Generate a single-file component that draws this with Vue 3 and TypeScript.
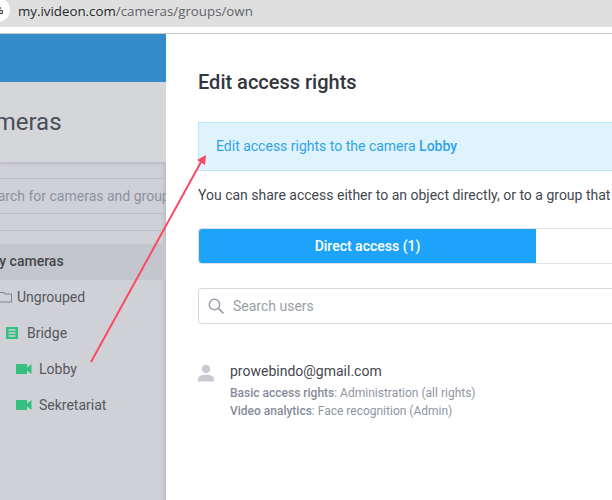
<script setup lang="ts">
interface Row { label: string; kind: 'folder' | 'group' | 'camera'; indent: number }
const rows: Row[] = [
  { label: 'Ungrouped', kind: 'folder', indent: 0 },
  { label: 'Bridge', kind: 'group', indent: 6 },
  { label: 'Lobby', kind: 'camera', indent: 16 },
  { label: 'Sekretariat', kind: 'camera', indent: 16 },
]
</script>

<template>
  <div class="page">
    <div class="urlbar">
      <span class="site-badge">
        <svg width="10" height="10" viewBox="0 0 10 10"><path d="M0 3h7M0 7h3" stroke="#444" stroke-width="1.4" fill="none"/><circle cx="7" cy="7" r="1.6" fill="none" stroke="#444" stroke-width="1.2"/></svg>
      </span>
      <span class="url"><span class="host">my.ivideon.com</span>/cameras/groups/own</span>
    </div>
    <div class="app">
      <aside class="side">
        <div class="side-head"></div>
        <div class="side-title"><h1>Cameras</h1></div>
        <div class="side-search"><span>Search for cameras and groups</span></div>
        <div class="side-gap"></div>
        <div class="side-my"><span>My cameras</span></div>
        <ul class="tree">
          <li v-for="r in rows" :key="r.label" class="tree-row" :style="{ paddingLeft: r.indent + 'px' }">
            <svg v-if="r.kind === 'folder'" class="ico" width="12" height="12" viewBox="0 0 12 12"><path d="M0 1.5h4l1.2 1.5h6.3v8H0" fill="none" stroke="#7f838c" stroke-width="1.1"/></svg>
            <svg v-else-if="r.kind === 'group'" class="ico" width="12" height="12" viewBox="0 0 12 12"><path fill-rule="evenodd" d="M0 0h12v12H0zM2.5 2.2v1.6h7V2.2zM2.5 5.2v1.6h7V5.2zM2.5 8.2v1.6h7V8.2z" fill="#35c07f"/></svg>
            <svg v-else class="ico" width="16" height="10" viewBox="0 0 16 10"><path d="M0 0h11v3.5L15.5 0v10L11 6.5V10H0z" fill="#35c07f"/></svg>
            <span>{{ r.label }}</span>
          </li>
        </ul>
      </aside>
      <main class="modal">
        <h2>Edit access rights</h2>
        <div class="alert"><span>Edit access rights to the camera <b>Lobby</b></span></div>
        <p class="lead">You can share access either to an object directly, or to a group that includes it.</p>
        <div class="tabs">
          <div class="tab on">Direct access (1)</div>
          <div class="tab"></div>
        </div>
        <div class="search">
          <svg width="16" height="16" viewBox="0 0 16 16"><circle cx="6.5" cy="6.5" r="5.2" fill="none" stroke="#9a9ea8" stroke-width="1.5"/><path d="M10.4 10.4l5 5" stroke="#9a9ea8" stroke-width="1.7"/></svg>
          <span>Search users</span>
        </div>
        <div class="user">
          <svg width="16" height="18" viewBox="0 0 16 18"><circle cx="8" cy="5" r="4.2" fill="#c7cad0"/><path d="M0 17.5v-2.5c0-3 4-4.2 8-4.2s8 1.2 8 4.2v2.5z" fill="#c7cad0"/></svg>
          <div class="user-info">
            <div class="email">prowebindo@gmail.com</div>
            <div class="meta"><b>Basic access rights</b>: Administration (all rights)</div>
            <div class="meta"><b>Video analytics</b>: Face recognition (Admin)</div>
          </div>
        </div>
      </main>
      <svg class="arrow" width="612" height="466" viewBox="0 0 612 466">
        <path d="M91 328L201 128" stroke="#fa4a63" stroke-width="2" fill="none"/>
        <path d="M206 121l-9 5 8 5z" fill="#fa4a63"/>
      </svg>
    </div>
  </div>
</template>

<style>
html, body { margin: 0; background: #fff; overflow: hidden; }
</style>

<style scoped>
.page { width: 612px; height: 500px; overflow: hidden; font-family: Roboto, "Liberation Sans", sans-serif; font-size: 14px; }
.urlbar { height: 27px; background: #dfdfdf; display: flex; align-items: center; padding-left: 18px; box-sizing: border-box; position: relative; }
.site-badge { position: absolute; left: -14px; top: -2px; width: 24px; height: 24px; border-radius: 50%; background: #fff; display: flex; align-items: center; justify-content: flex-end; padding-right: 6px; box-sizing: border-box; }
.url { font-family: "Open Sans", sans-serif; font-size: 13.3px; color: #5f6368; margin-top: -6px; }
.host { color: #26282c; }
.app { margin-top: 6px; height: 467px; border-top: 1px solid #c9c9c9; display: flex; position: relative; }
.side { width: 166px; flex: none; background: #d0d1d6; overflow: hidden; box-shadow: inset -6px 0 5px -5px #b1b2b6; }
.side-head { height: 48px; background: #338bc8; }
.side-title { height: 80px; background: #d5d6da; box-shadow: 0 2px 3px #bcbdc2; display: flex; align-items: center; }
.side-title h1 { margin: 0 0 0 -34px; font-size: 24px; font-weight: 400; color: #4b4e56; white-space: nowrap; }
.side-search { margin-top: 16px; height: 36px; box-sizing: border-box; border-top: 1px solid #bdbfc4; border-bottom: 1px solid #bdbfc4; display: flex; align-items: center; overflow: hidden; white-space: nowrap; color: #8b92a2; }
.side-search span { margin-left: -18px; }
.side-gap { height: 17px; box-sizing: border-box; border-bottom: 1px solid #bdbfc4; }
.side-my { margin-top: 13px; height: 36px; box-sizing: border-box; padding-bottom: 2px; background: #c3c6cd; display: flex; align-items: center; font-weight: 500; color: #43464e; }
.side-my span { margin-left: -13px; white-space: nowrap; }
.tree { list-style: none; margin: -1px 0 0; padding: 0; }
.tree-row { height: 36px; display: flex; align-items: center; color: #555861; gap: 7px; white-space: nowrap; }
.tree-row:first-child { gap: 5px; }
.tree-row:nth-child(2) { gap: 9px; }
.ico { flex: none; }
.modal { flex: 1; min-width: 0; background: #fff; border-top-left-radius: 9px; padding: 0 0 0 32px; overflow: hidden; white-space: nowrap; }
h2 { margin: 36px 0 0; font-size: 20px; line-height: 24px; font-weight: 500; color: #33363d; }
.alert { margin-top: 28px; height: 49px; box-sizing: border-box; margin-right: -2px; padding: 0 0 2px 18px; border: 1px solid #b9e6fa; background: #dff3fd; color: #2fa3ea; display: flex; align-items: center; }
.alert span { margin-left: -1px; }
.alert b { font-weight: 500; }
.lead { margin: 15px 0 0; line-height: 18px; color: #44474e; }
.tabs { margin-top: 24px; margin-right: -2px; height: 36px; display: flex; box-sizing: border-box; border: 1px solid #dedfe3; border-radius: 3px 0 0 3px; }
.tab { flex: none; width: 337px; }
.tab.on { background: #1ea3fb; color: #fff; font-weight: 500; display: flex; align-items: center; justify-content: center; border-radius: 3px 0 0 3px; }
.search { margin-top: 24px; margin-right: -2px; height: 36px; box-sizing: border-box; border: 1px solid #d8d9de; border-radius: 3px 0 0 3px; display: flex; align-items: center; padding-left: 9px; gap: 9px; color: #9a9ea8; }
.user { margin-top: 38px; display: flex; gap: 16px; align-items: flex-start; }
.user svg { margin-top: 2px; }
.email { color: #44474e; line-height: 20px; margin-top: -1px; }
.meta { font-size: 12px; line-height: 18px; color: #8f95a3; }
.email + .meta { margin-top: 3px; }
.meta b { font-weight: 500; color: #868c9a; }
.arrow { position: absolute; left: 0; top: 0; pointer-events: none; }
</style>
